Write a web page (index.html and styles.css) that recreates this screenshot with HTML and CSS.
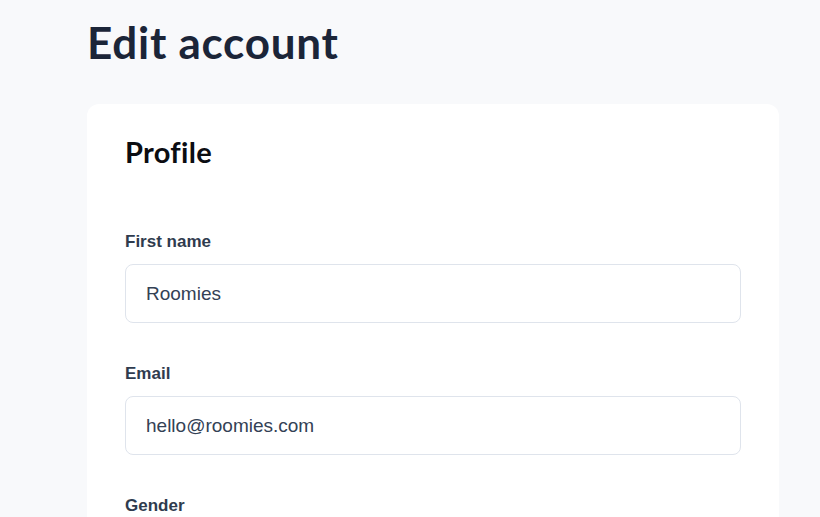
FILE: index.html
```html
<!DOCTYPE html>
<html lang="en">
<head>
<meta charset="utf-8">
<title>Edit account</title>
<link rel="stylesheet" href="styles.css">
</head>
<body>
<main class="page">
  <h1 class="page-title">Edit account</h1>
  <section class="card">
    <h2 class="card-title">Profile</h2>
    <div class="field">
      <label class="field-label" for="first">First name</label>
      <input class="field-input" id="first" type="text" value="Roomies">
    </div>
    <div class="field">
      <label class="field-label" for="email">Email</label>
      <input class="field-input" id="email" type="email" value="hello@roomies.com">
    </div>
    <div class="field">
      <label class="field-label" for="gender">Gender</label>
      <input class="field-input" id="gender" type="text" value="">
    </div>
  </section>
</main>
</body>
</html>
```

FILE: styles.css
```css
html, body {
  margin: 0;
  padding: 0;
  background: #f8f9fb;
  font-family: "Liberation Sans", Arial, sans-serif;
  overflow: hidden;
}

.page {
  padding: 14px 41px 0 87px;
}

.page-title {
  margin: 0;
  font-family: Lato, "Liberation Sans", sans-serif;
  font-weight: 700;
  font-size: 44px;
  line-height: 56px;
  color: #1b2538;
  letter-spacing: 0.75px;
}

.card {
  margin-top: 34px;
  background: #ffffff;
  border-radius: 12px;
  padding: 30px 38px 40px 38px;
}

.card-title {
  margin: 0 0 62px 0;
  font-family: Lato, "Liberation Sans", sans-serif;
  font-weight: 700;
  font-size: 29px;
  line-height: 36px;
  color: #0b0d12;
  letter-spacing: 0.3px;
}

.field {
  display: flex;
  flex-direction: column;
  gap: 12px;
  margin-bottom: 41px;
}

.field-label {
  font-weight: 700;
  font-size: 17px;
  line-height: 20px;
  color: #2f3b4e;
}

.field-input {
  box-sizing: border-box;
  height: 59px;
  width: 100%;
  border: 1.5px solid #dfe4ec;
  border-radius: 8px;
  padding: 0 20px;
  font-family: "Liberation Sans", Arial, sans-serif;
  font-size: 19px;
  color: #334155;
  background: #ffffff;
  outline: none;
}
```
